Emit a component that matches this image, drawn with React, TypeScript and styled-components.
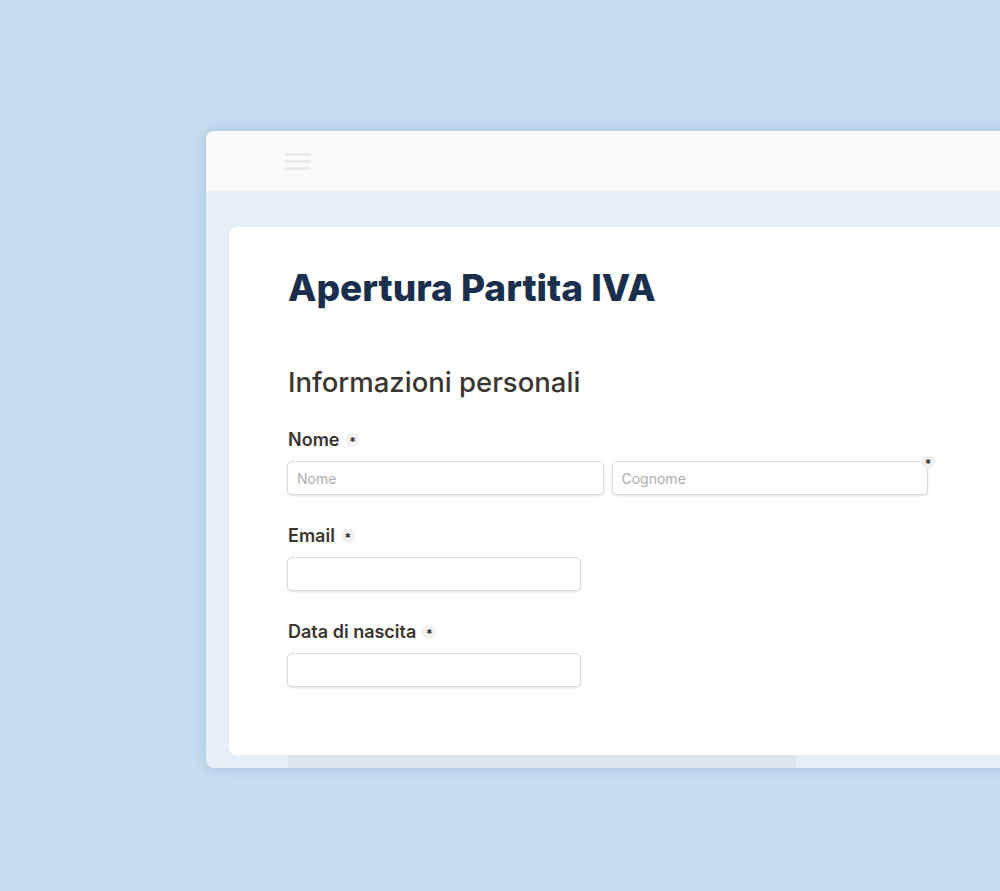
import React from 'react';
import styled, { createGlobalStyle } from 'styled-components';

const GlobalStyle = createGlobalStyle`
  html, body {
    margin: 0;
    padding: 0;
    background: #c6ddf1;
    font-family: Inter, "Noto Sans", sans-serif;
    overflow: hidden;
  }
`;

const Page = styled.div`
  width: 1000px;
  height: 891px;
  padding: 131px 0 0 206px;
  box-sizing: border-box;
  overflow: hidden;
`;

const Window = styled.div`
  width: 900px;
  height: 637px;
  border-radius: 8px 0 0 8px;
  background: #e6eef7;
  box-shadow: 0 0 14px rgba(120, 160, 200, 0.45);
  display: flex;
  flex-direction: column;
  overflow: hidden;
`;

const TopBar = styled.div`
  height: 61px;
  flex-shrink: 0;
  background: #fafafa;
  border-bottom: 1px solid #eef1f5;
  box-sizing: border-box;
  display: flex;
  align-items: center;
  padding-left: 79px;
`;

const Hamburger = styled.div`
  width: 26px;
  display: flex;
  flex-direction: column;
  gap: 4px;

  span {
    height: 3px;
    border-radius: 2px;
    background: #ebebeb;
  }
`;

const Body = styled.div`
  flex: 1;
  padding: 35px 0 0 23px;
  display: flex;
  flex-direction: column;
`;

const Card = styled.div`
  height: 528px;
  background: #ffffff;
  border-radius: 8px 0 0 8px;
  padding: 39px 0 0 59px;
  box-sizing: border-box;
`;

const Footer = styled.div`
  margin-left: 59px;
  width: 508px;
  flex: 1;
  background: #dfe6ee;
`;

const Title = styled.h1`
  margin: 0;
  font-size: 37px;
  font-weight: 800;
  color: #1a2f4e;
  line-height: 44px;
`;

const SectionTitle = styled.h2`
  margin: 56px 0 0;
  font-size: 27.5px;
  font-weight: 500;
  color: #3b3632;
  line-height: 32px;
`;

const Field = styled.div<{ $top: number }>`
  margin-top: ${(p) => p.$top}px;
`;

const Label = styled.div`
  display: flex;
  align-items: center;
  gap: 6px;
  font-size: 18px;
  font-weight: 600;
  color: #3b3632;
  line-height: 22px;
  margin-bottom: 10px;
`;

const Required = styled.span`
  width: 14px;
  height: 14px;
  border-radius: 50%;
  background: #f1f1f1;
  color: #2b2b2b;
  font-size: 12px;
  font-weight: 700;
  display: inline-flex;
  align-items: center;
  justify-content: center;
  line-height: 1;
  padding-top: 4px;
  box-sizing: border-box;
`;

const CornerRequired = styled(Required)`
  position: absolute;
  top: -6px;
  right: -7px;
`;

const Row = styled.div`
  display: flex;
  gap: 8px;
  width: 641px;
  margin-left: -1px;
`;

const InputWrap = styled.div`
  position: relative;
  flex: 1;
`;

const Input = styled.input<{ $width?: number }>`
  width: ${(p) => (p.$width ? `${p.$width}px` : '100%')};
  height: 34px;
  box-sizing: border-box;
  border: 1px solid #dadada;
  border-radius: 5px;
  box-shadow: 0 1px 2px rgba(0, 0, 0, 0.12);
  padding: 0 9px;
  font-family: Inter, "Noto Sans", sans-serif;
  font-size: 14px;
  color: #333;
  outline: none;
  display: block;
  margin-left: ${(p) => (p.$width ? '-1px' : '0')};

  &::placeholder {
    color: #aeaeae;
  }
`;

export default function App() {
  return (
    <>
      <GlobalStyle />
      <Page>
        <Window>
          <TopBar>
            <Hamburger>
              <span />
              <span />
              <span />
            </Hamburger>
          </TopBar>
          <Body>
            <Card>
              <Title>Apertura Partita IVA</Title>
              <SectionTitle>Informazioni personali</SectionTitle>
              <Field $top={31}>
                <Label>
                  Nome <Required>*</Required>
                </Label>
                <Row>
                  <InputWrap>
                    <Input placeholder="Nome" />
                  </InputWrap>
                  <InputWrap>
                    <Input placeholder="Cognome" />
                    <CornerRequired>*</CornerRequired>
                  </InputWrap>
                </Row>
              </Field>
              <Field $top={30}>
                <Label>
                  Email <Required>*</Required>
                </Label>
                <Input $width={294} />
              </Field>
              <Field $top={30}>
                <Label>
                  Data di nascita <Required>*</Required>
                </Label>
                <Input $width={294} />
              </Field>
            </Card>
            <Footer />
          </Body>
        </Window>
      </Page>
    </>
  );
}
